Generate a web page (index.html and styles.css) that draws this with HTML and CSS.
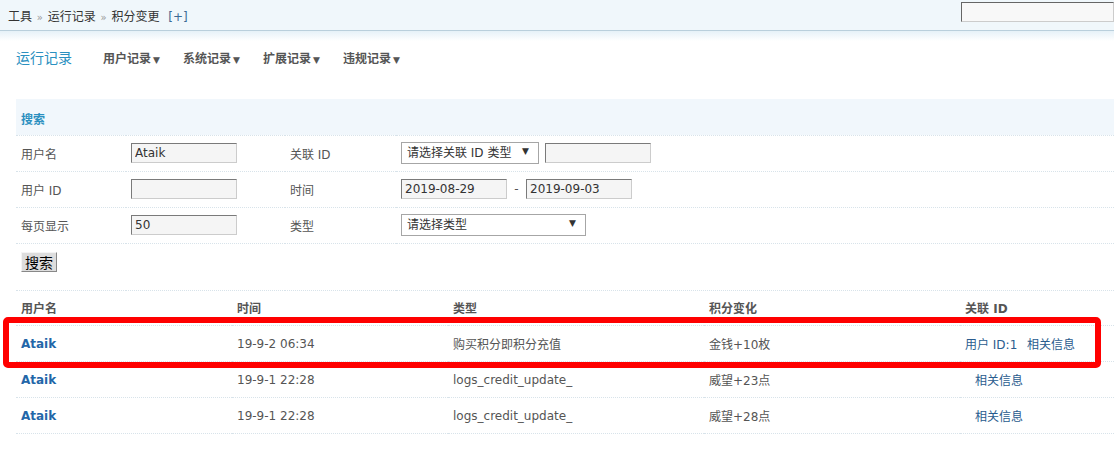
FILE: index.html
```html
<!DOCTYPE html>
<html lang="zh-CN">
<head>
    <meta charset="UTF-8">
    <title>积分变更</title>
    <link rel="stylesheet" href="styles.css">
</head>
<body>

<div class="topbar">
    <div class="crumbs">工具 <span class="sep">»</span> 运行记录 <span class="sep">»</span> 积分变更 <a class="plus" href="#">[+]</a></div>
    <input class="topsearch" type="text">
</div>
<div class="shade"></div>

<div class="nav">
    <h3>运行记录</h3>
    <a href="#">用户记录<em>▼</em></a>
    <a href="#">系统记录<em>▼</em></a>
    <a href="#">扩展记录<em>▼</em></a>
    <a href="#">违规记录<em>▼</em></a>
</div>

<div class="main">
    <table class="search">
        <tr class="head"><th colspan="4">搜索</th></tr>
        <tr>
            <td class="c1">用户名</td>
            <td class="c2"><input class="txt" type="text" value="Ataik"></td>
            <td class="c3">关联 ID</td>
            <td>
                <span class="sel sel-id"><select><option>请选择关联 ID 类型</option></select><em>▼</em></span>
                <input class="txt" type="text">
            </td>
        </tr>
        <tr>
            <td class="c1">用户 ID</td>
            <td class="c2"><input class="txt" type="text"></td>
            <td class="c3">时间</td>
            <td><input class="txt" type="text" value="2019-08-29"><span class="dash">-</span><input class="txt" type="text" value="2019-09-03"></td>
        </tr>
        <tr>
            <td class="c1">每页显示</td>
            <td class="c2"><input class="txt" type="text" value="50"></td>
            <td class="c3">类型</td>
            <td><span class="sel sel-type"><select><option>请选择类型</option></select><em>▼</em></span></td>
        </tr>
        <tr class="btnrow">
            <td colspan="4"><button class="btn">搜索</button></td>
        </tr>
    </table>

    <table class="list">
        <tr class="header">
            <th class="w1">用户名</th>
            <th class="w1">时间</th>
            <th class="w2">类型</th>
            <th class="w2">积分变化</th>
            <th>关联 ID</th>
        </tr>
        <tr>
            <td><a class="user" href="#">Ataik</a></td>
            <td>19-9-2 06:34</td>
            <td>购买积分即积分充值</td>
            <td>金钱+10枚</td>
            <td><a class="link" href="#">用户 ID:1</a> <a class="link" href="#">相关信息</a></td>
        </tr>
        <tr>
            <td><a class="user" href="#">Ataik</a></td>
            <td>19-9-1 22:28</td>
            <td>logs_credit_update_</td>
            <td>威望+23点</td>
            <td><a class="link pad" href="#">相关信息</a></td>
        </tr>
        <tr>
            <td><a class="user" href="#">Ataik</a></td>
            <td>19-9-1 22:28</td>
            <td>logs_credit_update_</td>
            <td>威望+28点</td>
            <td><a class="link pad" href="#">相关信息</a></td>
        </tr>
    </table>
</div>

<div class="mark"></div>

</body>
</html>
```

FILE: styles.css
```css
body {
    margin: 0;
    width: 1114px;
    overflow: hidden;
    background: #fff;
    color: #555;
    font: 12px "DejaVu Sans", "Noto Sans CJK SC", sans-serif;
}

a {
    text-decoration: none;
}

.topbar {
    display: flex;
    justify-content: space-between;
    align-items: flex-start;
    height: 30px;
    background: #f0f7fb;
    border-bottom: 1px solid #b9cfdc;
}

.crumbs {
    padding: 9px 0 0 8px;
    color: #333;
    line-height: 16px;
}

.crumbs .sep {
    color: #999;
    font-size: 10px;
    margin: 0 1px;
}

.crumbs .plus {
    color: #3b6a94;
    margin-left: 5px;
}

.topsearch {
    width: 153px;
    height: 20px;
    box-sizing: border-box;
    margin-top: 2px;
    padding: 0;
    background: #f8f8f8;
    border: 1px solid #ccc;
    border-top-color: #666;
    border-left-color: #666;
}

.shade {
    height: 10px;
    background: linear-gradient(#e6f1f8, #fff);
}

.nav {
    display: flex;
    align-items: center;
    height: 36px;
    margin-top: -2px;
    padding-left: 16px;
}

.nav h3 {
    margin: 0 31px 0 0;
    font-size: 14px;
    font-weight: normal;
    color: #2b90c0;
}

.nav a {
    margin-right: 8px;
    color: #555;
    font-weight: bold;
    width: 72px;
}

.nav a em {
    font-style: normal;
    font-size: 9px;
    margin-left: 2px;
}

.main {
    padding: 24px 0 0 16px;
}

table {
    border-collapse: collapse;
    width: 1098px;
}

td, th {
    padding: 0 0 0 5px;
    text-align: left;
    border-bottom: 1px dotted #d8e3ea;
}

.search tr {
    height: 36px;
}

.search .head th {
    height: 30px;
    padding-top: 3px;
    background: #f1f7fc;
    color: #2b90c0;
    font-weight: bold;
}

.search .c1 {
    width: 105px;
}

.search .c2 {
    width: 154px;
}

.search .c3 {
    width: 106px;
}

.txt {
    width: 106px;
    height: 20px;
    box-sizing: border-box;
    padding: 0 3px;
    margin: 0;
    vertical-align: middle;
    background: #f5f5f5;
    color: #333;
    font: 12px "DejaVu Sans", "Noto Sans CJK SC", sans-serif;
    border: 1px solid #ccc;
    border-top-color: #7a7a7a;
    border-left-color: #7a7a7a;
}

.sel {
    position: relative;
    display: inline-block;
    vertical-align: middle;
    margin-right: 2px;
}

.sel select {
    appearance: none;
    -webkit-appearance: none;
    height: 22px;
    padding: 0 0 0 5px;
    margin: 0;
    background: #fff;
    color: #333;
    font: 12px "DejaVu Sans", "Noto Sans CJK SC", sans-serif;
    border: 1px solid #a6a6a6;
    border-radius: 0;
}

.sel em {
    position: absolute;
    top: 4px;
    font-style: normal;
    font-size: 9px;
    color: #333;
}

.sel-id select {
    width: 138px;
}

.sel-id em {
    right: 10px;
}

.sel-type select {
    width: 185px;
}

.sel-type em {
    right: 10px;
}

.dash {
    display: inline-block;
    width: 19px;
    text-align: center;
    vertical-align: middle;
}

.search .btnrow {
    height: 47px;
}

.search .btnrow td {
    vertical-align: top;
    padding-top: 8px;
}

.btn {
    height: 20px;
    padding: 0 3px;
    background: #ddd;
    color: #000;
    font: 14px "Noto Sans CJK SC", sans-serif;
    line-height: 16px;
    border: 1px solid #888;
    border-top-color: #f4f4f4;
    border-left-color: #f4f4f4;
}

.list tr {
    height: 36px;
}

.list .header {
    height: 35px;
}

.list th {
    color: #555;
    font-weight: bold;
}

.list .w1 {
    width: 211px;
}

.list .w2 {
    width: 251px;
}

.user {
    color: #2366a8;
    font-weight: bold;
}

.link {
    color: #2a5c8e;
    margin-right: 6px;
}

.link.pad {
    margin-left: 10px;
}

.mark {
    position: absolute;
    left: 3px;
    top: 317px;
    width: 1086px;
    height: 39px;
    border: 6px solid #f00;
    border-radius: 5px;
}
```
